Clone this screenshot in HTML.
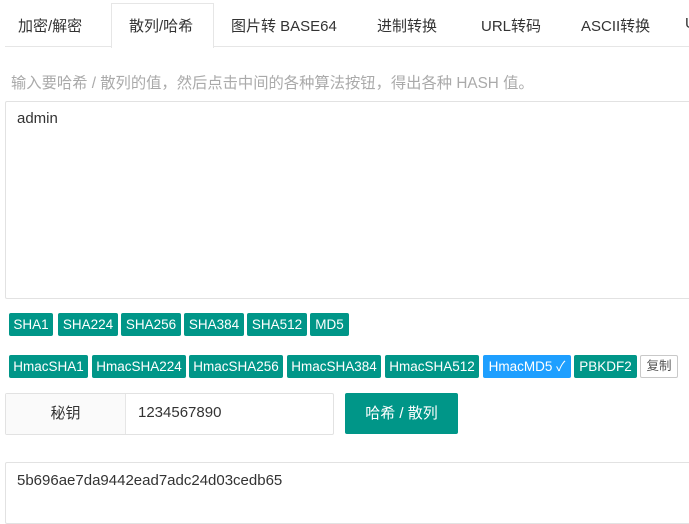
<!DOCTYPE html>
<html><head><meta charset="utf-8"><style>
body{margin:0;width:689px;height:513px;overflow:hidden;background:#fff;font-family:"Liberation Sans","Noto Sans CJK SC",sans-serif;font-size:15px;color:#333;position:relative}
.a{position:absolute;white-space:nowrap}
.tabline{position:absolute;left:5px;right:0;top:46px;height:1px;background:#e6e6e6}
.tab{position:absolute;top:15px;font-size:15px;color:#333;white-space:nowrap}
.active{position:absolute;left:111px;top:3px;width:101px;height:44px;border:1px solid #e6e6e6;border-bottom:none;background:#fff}
.b{position:absolute;height:23px;line-height:23px;background:#009688;color:#fff;font-size:13.5px;text-align:center;border-radius:2px;white-space:nowrap}
.box{position:absolute;border:1px solid #e2e2e2;border-radius:2px}
</style></head><body>
<div class="tabline"></div>
<div class="active"></div>
<div class="tab" style="left:18px">加密/解密</div>
<div class="tab" style="left:129px">散列/哈希</div>
<div class="tab" style="left:231px">图片转 BASE64</div>
<div class="tab" style="left:377px">进制转换</div>
<div class="tab" style="left:481px">URL转码</div>
<div class="tab" style="left:581px">ASCII转换</div>
<div class="tab" style="left:685px">U</div>
<div class="a" style="left:11px;top:71px;color:#aaa;font-size:15.3px">输入要哈希 / 散列的值，然后点击中间的各种算法按钮，得出各种 HASH 值。</div>
<div class="box" style="left:5px;top:101px;width:700px;height:196px"></div>
<div class="a" style="left:17px;top:110px">admin</div>
<div class="b" style="left:9px;top:313px;width:44px">SHA1</div>
<div class="b" style="left:58px;top:313px;width:60px">SHA224</div>
<div class="b" style="left:121px;top:313px;width:60px">SHA256</div>
<div class="b" style="left:184px;top:313px;width:60px">SHA384</div>
<div class="b" style="left:247px;top:313px;width:60px">SHA512</div>
<div class="b" style="left:310px;top:313px;width:39px">MD5</div>
<div class="b" style="left:9px;top:355px;width:79px">HmacSHA1</div>
<div class="b" style="left:92px;top:355px;width:94px">HmacSHA224</div>
<div class="b" style="left:189px;top:355px;width:94px">HmacSHA256</div>
<div class="b" style="left:287px;top:355px;width:94px">HmacSHA384</div>
<div class="b" style="left:385px;top:355px;width:94px">HmacSHA512</div>
<div class="b" style="left:483px;top:355px;width:88px;background:#1E9FFF">HmacMD5 ✓</div>
<div class="b" style="left:574px;top:355px;width:63px">PBKDF2</div>
<div class="b" style="left:640px;top:355px;width:36px;height:21px;line-height:21px;background:#fff;color:#555;border:1px solid #c9c9c9;font-size:12.5px">复制</div>
<div class="box" style="left:5px;top:393px;width:327px;height:40px"></div>
<div style="position:absolute;left:6px;top:394px;width:119px;height:40px;background:#fafafa;border-right:1px solid #e6e6e6;text-align:center;line-height:40px">秘钥</div>
<div class="a" style="left:138px;top:404px">1234567890</div>
<div class="b" style="left:345px;top:393px;width:113px;height:41px;line-height:41px;font-size:15px">哈希 / 散列</div>
<div class="box" style="left:5px;top:462px;width:700px;height:60px"></div>
<div class="a" style="left:17px;top:472px">5b696ae7da9442ead7adc24d03cedb65</div>
</body></html>
